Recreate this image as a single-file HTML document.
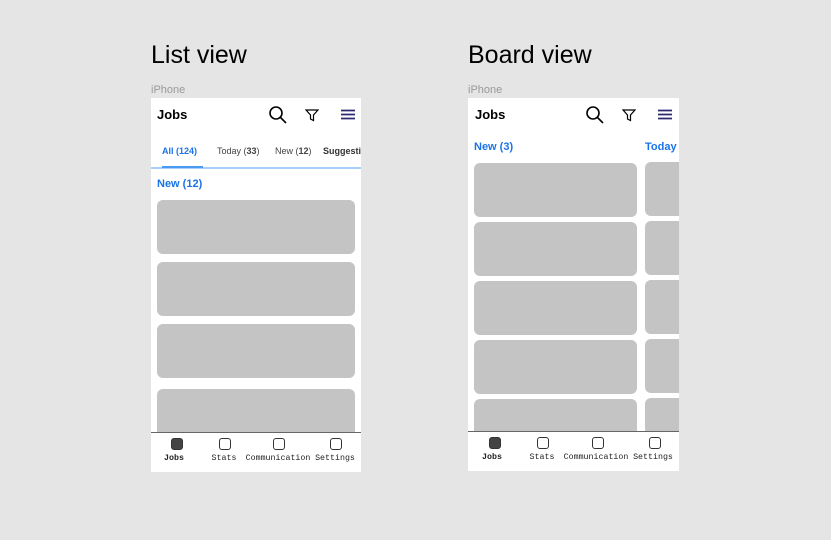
<!DOCTYPE html><html><head><style>
body{margin:0;width:831px;height:540px;background:#e5e5e5;position:relative;overflow:hidden;font-family:"Liberation Sans",sans-serif}
.a{position:absolute}
.h{font-size:25px;color:#000}
.ip{font-size:11px;color:#999}
.ph{background:#fff;overflow:hidden}
.c{position:absolute;background:#c4c4c4;border-radius:6px}
.t{font-weight:bold;font-size:13px}
.b{color:#1a73e8;font-weight:bold;font-size:11px}
.nav{position:absolute;left:0;right:0;background:#fff;border-top:1px solid #666;height:40px}
.ni{position:absolute;width:10px;height:10px;border:1.3px solid #333;border-radius:3px;top:5px}
.nl{position:absolute;top:21px;font-family:"Liberation Mono",monospace;font-size:8.3px;color:#222;transform:translateX(-50%);white-space:nowrap}
</style></head><body>
<div class="a h" style="left:151px;top:41px">List view</div>
<div class="a h" style="left:468px;top:41px">Board view</div>
<div class="a ip" style="left:151px;top:84px">iPhone</div>
<div class="a ip" style="left:468px;top:84px">iPhone</div>

<div class="a ph" style="left:151px;top:98px;width:210px;height:374px">
 <div class="a t" style="left:6px;top:9px">Jobs</div>
 <svg class="a" style="left:117px;top:7px" width="20" height="20"><circle cx="8" cy="8" r="6" fill="none" stroke="#000" stroke-width="1.6"/><line x1="12.5" y1="12.5" x2="18" y2="18" stroke="#000" stroke-width="1.6"/></svg>
 <svg class="a" style="left:154px;top:10px" width="14" height="14"><path d="M1 2H13L8.5 7V12.5L5.5 11V7Z" fill="none" stroke="#000" stroke-width="1.2"/></svg>
 <svg class="a" style="left:190px;top:11px" width="15" height="12"><path d="M0 1.5H14M0 5.5H14M0 9.5H14" stroke="#2c2a6e" stroke-width="1.7"/></svg>
 <div class="a" style="left:11px;top:48px;font-size:9px;color:#1a73e8;font-weight:bold">All (124)</div>
 <div class="a" style="left:66px;top:48px;font-size:9px;color:#444">Today (<b>33</b>)</div>
 <div class="a" style="left:124px;top:48px;font-size:9px;color:#444">New (<b>12</b>)</div>
 <div class="a" style="left:172px;top:48px;font-size:9px;color:#333;font-weight:bold">Suggestions</div>
 <div class="a" style="left:0;top:69px;width:210px;height:2px;background:#a8d0fa"></div>
 <div class="a" style="left:11px;top:68px;width:41px;height:2px;background:#4a9af0"></div>
 <div class="a b" style="left:6px;top:80px">New (12)</div>
 <div class="c" style="left:6px;top:102px;width:198px;height:54px"></div>
 <div class="c" style="left:6px;top:164px;width:198px;height:54px"></div>
 <div class="c" style="left:6px;top:226px;width:198px;height:54px"></div>
 <div class="c" style="left:6px;top:291px;width:198px;height:54px"></div>
 <div class="nav" style="top:334px">
  <div class="ni" style="left:20px;background:#444"></div><div class="nl" style="left:23px;font-weight:bold">Jobs</div>
  <div class="ni" style="left:68px"></div><div class="nl" style="left:73px">Stats</div>
  <div class="ni" style="left:122px"></div><div class="nl" style="left:127px">Communication</div>
  <div class="ni" style="left:179px"></div><div class="nl" style="left:184px">Settings</div>
 </div>
</div>

<div class="a ph" style="left:468px;top:98px;width:211px;height:373px">
 <div class="a t" style="left:7px;top:9px">Jobs</div>
 <svg class="a" style="left:117px;top:7px" width="20" height="20"><circle cx="8" cy="8" r="6" fill="none" stroke="#000" stroke-width="1.6"/><line x1="12.5" y1="12.5" x2="18" y2="18" stroke="#000" stroke-width="1.6"/></svg>
 <svg class="a" style="left:154px;top:10px" width="14" height="14"><path d="M1 2H13L8.5 7V12.5L5.5 11V7Z" fill="none" stroke="#000" stroke-width="1.2"/></svg>
 <svg class="a" style="left:190px;top:11px" width="15" height="12"><path d="M0 1.5H14M0 5.5H14M0 9.5H14" stroke="#2c2a6e" stroke-width="1.7"/></svg>
 <div class="a b" style="left:6px;top:43px">New (3)</div>
 <div class="a b" style="left:177px;top:43px;white-space:nowrap">Today (5)</div>
 <div class="c" style="left:6px;top:65px;width:163px;height:54px"></div>
 <div class="c" style="left:6px;top:124px;width:163px;height:54px"></div>
 <div class="c" style="left:6px;top:183px;width:163px;height:54px"></div>
 <div class="c" style="left:6px;top:242px;width:163px;height:54px"></div>
 <div class="c" style="left:6px;top:301px;width:163px;height:54px"></div>
 <div class="c" style="left:177px;top:64px;width:60px;height:54px"></div>
 <div class="c" style="left:177px;top:123px;width:60px;height:54px"></div>
 <div class="c" style="left:177px;top:182px;width:60px;height:54px"></div>
 <div class="c" style="left:177px;top:241px;width:60px;height:54px"></div>
 <div class="c" style="left:177px;top:300px;width:60px;height:54px"></div>
 <div class="nav" style="top:333px">
  <div class="ni" style="left:21px;background:#444"></div><div class="nl" style="left:24px;font-weight:bold">Jobs</div>
  <div class="ni" style="left:69px"></div><div class="nl" style="left:74px">Stats</div>
  <div class="ni" style="left:124px"></div><div class="nl" style="left:128px">Communication</div>
  <div class="ni" style="left:181px"></div><div class="nl" style="left:185px">Settings</div>
 </div>
</div>
</body></html>
